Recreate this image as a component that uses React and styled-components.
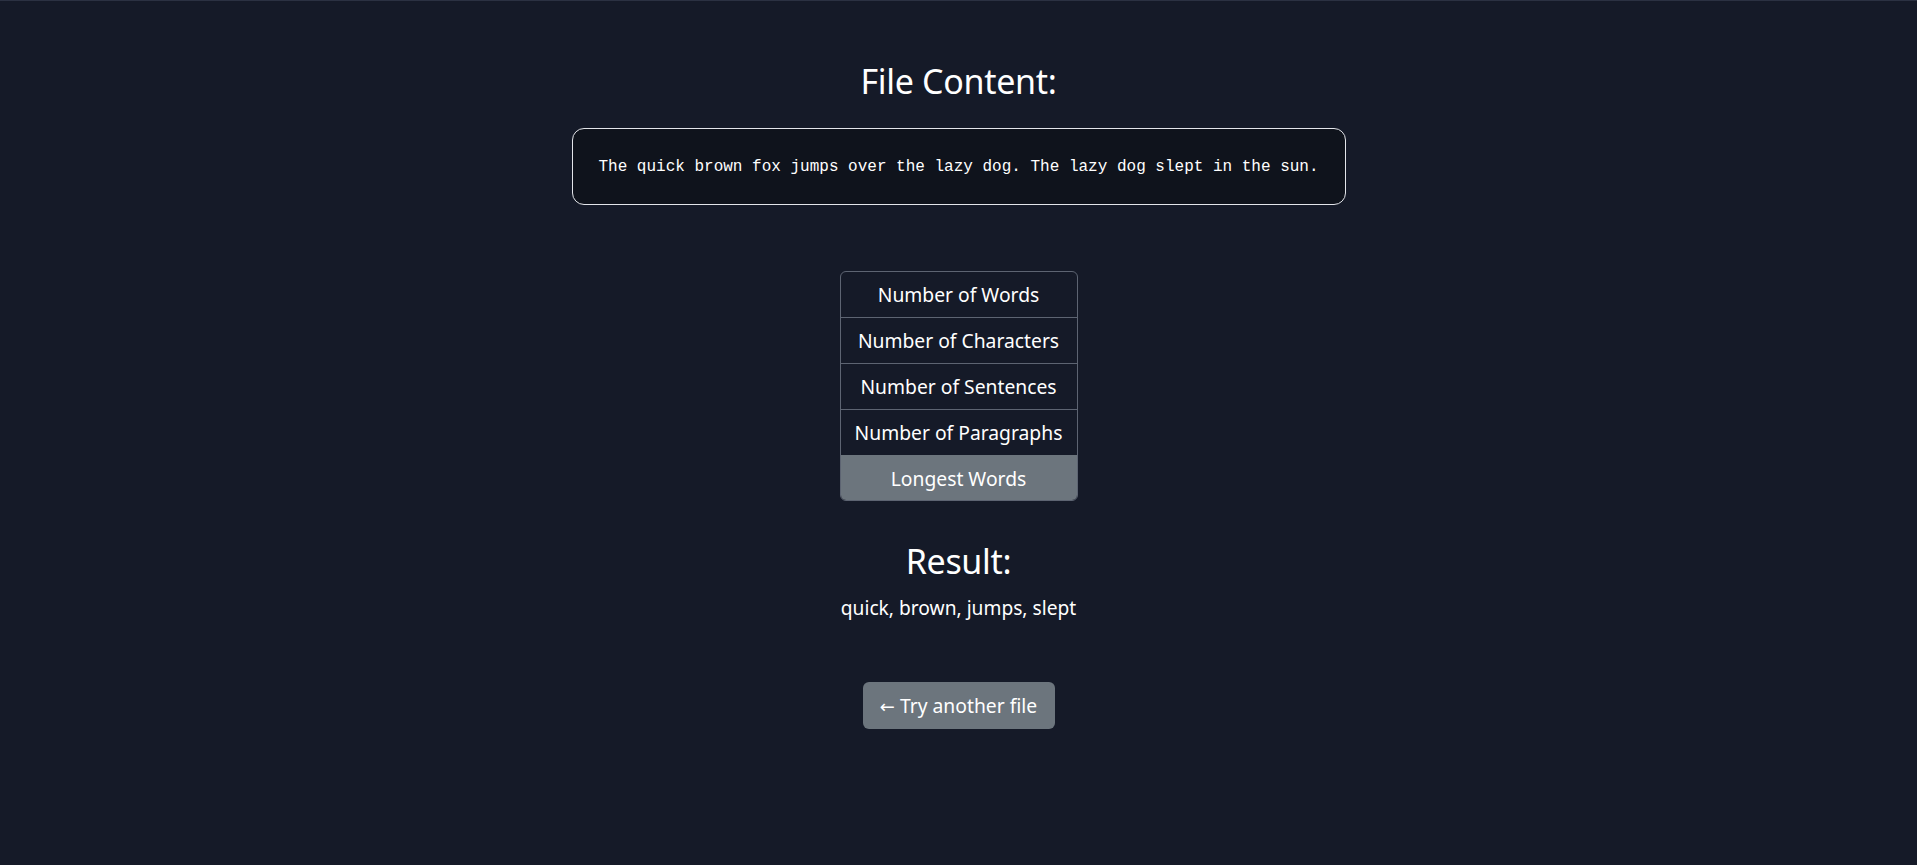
import React from 'react';
import styled, { createGlobalStyle } from 'styled-components';

const GlobalStyle = createGlobalStyle`
  html, body {
    margin: 0;
    padding: 0;
    background: #151a28;
    color: #ffffff;
    font-family: 'Noto Sans', 'Liberation Sans', sans-serif;
  }
`;

const options = [
  'Number of Words',
  'Number of Characters',
  'Number of Sentences',
  'Number of Paragraphs',
  'Longest Words',
];

const App = () => {
  const active = 'Longest Words';

  return (
    <>
      <GlobalStyle />
      <Page>
        <Title>File Content:</Title>
        <ContentBox>
          <Pre>The quick brown fox jumps over the lazy dog. The lazy dog slept in the sun.</Pre>
        </ContentBox>
        <OptionList>
          {options.map((label) => (
            <OptionItem key={label} $active={label === active}>
              {label}
            </OptionItem>
          ))}
        </OptionList>
        <ResultTitle>Result:</ResultTitle>
        <ResultText>quick, brown, jumps, slept</ResultText>
        <BackButton type="button">
          <Arrow>←</Arrow> Try another file
        </BackButton>
      </Page>
    </>
  );
};

export default App;

const Page = styled.main`
  min-height: 865px;
  box-sizing: border-box;
  border-top: 1px solid #2b3142;
  display: flex;
  flex-direction: column;
  align-items: center;
  padding-top: 59px;
`;

const Title = styled.h2`
  margin: 0;
  font-size: 34px;
  font-weight: 400;
  line-height: 42px;
  letter-spacing: -0.3px;
`;

const ContentBox = styled.div`
  margin-top: 26px;
  width: 774px;
  height: 77px;
  box-sizing: border-box;
  border: 1px solid #e3e5ea;
  border-radius: 12px;
  background: #0f131c;
  display: flex;
  align-items: center;
  justify-content: center;
`;

const Pre = styled.pre`
  margin: 0;
  font-family: 'Liberation Mono', 'DejaVu Sans Mono', monospace;
  font-size: 16px;
  color: #ffffff;
`;

const OptionList = styled.ul`
  margin: 66px 0 0;
  padding: 0;
  list-style: none;
  width: 236px;
  border: 1px solid #5d6472;
  border-radius: 6px;
  overflow: hidden;
`;

const OptionItem = styled.li`
  height: 46px;
  box-sizing: border-box;
  display: flex;
  align-items: center;
  justify-content: center;
  font-size: 19.3px;
  white-space: nowrap;
  background: ${(p) => (p.$active ? '#6c757d' : 'transparent')};
  border-top: 1px solid ${(p) => (p.$active ? '#6c757d' : '#5d6472')};

  &:first-child {
    border-top: none;
    height: 45px;
  }
  &:last-child {
    height: 45px;
  }
`;

const ResultTitle = styled.h2`
  margin: 39px 0 0;
  font-size: 34px;
  font-weight: 400;
  line-height: 42px;
  letter-spacing: -0.3px;
`;

const ResultText = styled.p`
  margin: 12px 0 0;
  font-size: 19.2px;
  line-height: 27px;
`;

const BackButton = styled.button`
  margin-top: 61px;
  width: 192px;
  height: 47px;
  border: none;
  border-radius: 6px;
  background: #6c757d;
  color: #ffffff;
  font-family: 'Noto Sans', 'Liberation Sans', sans-serif;
  font-size: 19.3px;
  cursor: pointer;
`;

const Arrow = styled.span`
  font-family: 'DejaVu Sans', sans-serif;
  font-size: 18px;
`;
